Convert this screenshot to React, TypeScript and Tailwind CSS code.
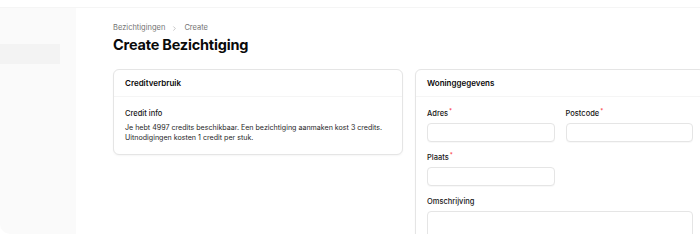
import { ChevronRight } from "lucide-react";

function Field({ label, required, className }: { label: string; required?: boolean; className?: string }) {
  return (
    <div className={className}>
      <label className="block text-[7.5px] font-medium leading-[10px] text-neutral-900">
        {label}
        {required && <sup className="ml-[1px] text-[6px] text-red-500">*</sup>}
      </label>
      <div className="mt-[4px] h-[19px] rounded-[4px] border border-neutral-200 bg-white shadow-[0_1px_1px_rgba(0,0,0,0.03)]" />
    </div>
  );
}

export default function App() {
  return (
    <div className="h-[234px] w-[700px] overflow-hidden bg-white font-['Inter',sans-serif]">
      <div className="mt-[7px] flex h-[227px] border-t border-neutral-100">
        {/* Sidebar */}
        <aside className="w-[76px] shrink-0 rounded-bl-[10px] bg-[#fafafa] pt-[36px]">
          <div className="h-[20px] w-[60px] bg-[#f3f3f3]" />
        </aside>

        {/* Main */}
        <main className="min-w-0 flex-1 pl-[37px] pt-[15px]">
          <nav className="flex items-center gap-[6px] text-[7.5px] leading-[10px] text-neutral-500">
            <span>Bezichtigingen</span>
            <ChevronRight className="h-[7px] w-[7px] text-neutral-400" />
            <span>Create</span>
          </nav>
          <h1 className="mt-[2px] text-[14.5px] font-bold leading-[20px] tracking-[-0.2px] text-neutral-950">
            Create Bezichtiging
          </h1>

          <div className="mt-[14px] grid w-[592px] grid-cols-2 items-start gap-[12px]">
            {/* Creditverbruik */}
            <section className="rounded-[6px] border border-neutral-200 bg-white shadow-[0_1px_2px_rgba(0,0,0,0.04)]">
              <div className="border-b border-neutral-100 px-[11px] py-[8px]">
                <h2 className="text-[8px] font-semibold leading-[10px] text-neutral-950">Creditverbruik</h2>
              </div>
              <div className="px-[11px] pb-[11px] pt-[12px]">
                <p className="text-[7.5px] font-medium leading-[10px] text-neutral-900">Credit info</p>
                <p className="mt-[4px] whitespace-nowrap text-[7.1px] leading-[10px] text-neutral-800">
                  Je hebt 4997 credits beschikbaar. Een bezichtiging aanmaken kost 3 credits.
                  <br />
                  Uitnodigingen kosten 1 credit per stuk.
                </p>
              </div>
            </section>

            {/* Woninggegevens */}
            <section className="rounded-[6px] border border-neutral-200 bg-white shadow-[0_1px_2px_rgba(0,0,0,0.04)]">
              <div className="border-b border-neutral-100 px-[11px] py-[8px]">
                <h2 className="text-[8px] font-semibold leading-[10px] text-neutral-950">Woninggegevens</h2>
              </div>
              <div className="px-[11px] pt-[12px]">
                <div className="grid grid-cols-2 gap-x-[11px] gap-y-[11px]">
                  <Field label="Adres" required />
                  <Field label="Postcode" required />
                  <Field label="Plaats" required />
                  <div />
                </div>
                <div className="mt-[11px]">
                  <label className="block text-[7.5px] font-medium leading-[10px] text-neutral-900">Omschrijving</label>
                  <div className="mt-[4px] h-[60px] rounded-[4px] border border-neutral-200 bg-white" />
                </div>
              </div>
            </section>
          </div>
        </main>
      </div>
    </div>
  );
}
